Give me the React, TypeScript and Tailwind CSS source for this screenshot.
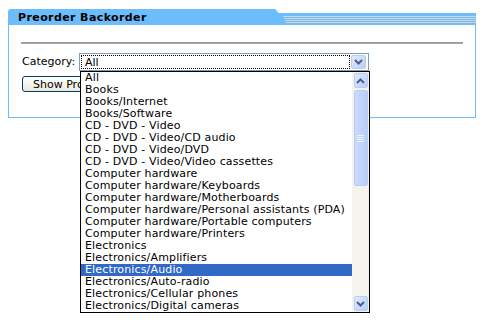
import React from "react";

const items = [
  "All",
  "Books",
  "Books/Internet",
  "Books/Software",
  "CD - DVD - Video",
  "CD - DVD - Video/CD audio",
  "CD - DVD - Video/DVD",
  "CD - DVD - Video/Video cassettes",
  "Computer hardware",
  "Computer hardware/Keyboards",
  "Computer hardware/Motherboards",
  "Computer hardware/Personal assistants (PDA)",
  "Computer hardware/Portable computers",
  "Computer hardware/Printers",
  "Electronics",
  "Electronics/Amplifiers",
  "Electronics/Audio",
  "Electronics/Auto-radio",
  "Electronics/Cellular phones",
  "Electronics/Digital cameras",
];

const Chevron = ({ up }: { up?: boolean }) => (
  <svg width="9" height="6" viewBox="0 0 9 6">
    <path
      d={up ? "M1 5 L4.5 1.5 L8 5" : "M1 1 L4.5 4.5 L8 1"}
      fill="none"
      stroke="#4d6185"
      strokeWidth="2"
    />
  </svg>
);

const ScrollBtn = ({ up }: { up?: boolean }) => (
  <div className="w-[14px] h-[15px] rounded-[2px] border border-[#b8cdf6] bg-gradient-to-br from-[#e1eafe] to-[#b9cdfa] flex items-center justify-center">
    <Chevron up={up} />
  </div>
);

export default function App() {
  return (
    <div
      className="relative w-[491px] h-[334px] bg-white overflow-hidden text-[11px] text-black"
      style={{ fontFamily: "Verdana, 'DejaVu Sans', sans-serif" }}
    >
      <div className="ml-[8px] pt-[9px] w-[468px]">
        {/* header */}
        <div className="flex h-[16px]">
          <div className="w-[266px] h-[16px] bg-[#6bbdfb] rounded-tl-[3px] flex items-center pl-[10px] font-bold text-[11px] leading-none pt-[1px] tracking-[0.4px]">
            Preorder Backorder
          </div>
          <svg width="4" height="16" viewBox="0 0 4 16" className="shrink-0 block">
            <polygon points="0,0 1,0 4,3 4,16 0,16" fill="#6bbdfb" />
          </svg>
          <div className="flex-1 flex flex-col">
            <div className="h-[4px]" />
            <div className="h-[12px] bg-[#6bbdfb] flex flex-col">
              <div className="h-[3px]" />
              <div className="h-px bg-[#d4d4d4] ml-[5px]" />
              <div className="h-px" />
              <div className="h-px bg-[#d4d4d4] ml-[6px]" />
              <div className="h-px" />
              <div className="h-px bg-[#d4d4d4] ml-[7px]" />
              <div className="h-px" />
              <div className="h-px bg-[#d4d4d4] ml-[8px]" />
            </div>
          </div>
        </div>
        {/* body */}
        <div className="h-[93px] border-l border-r border-b border-[#6bbdfb] pl-[12px] pr-[12px] pt-[17px]">
          <div className="h-[2px] border-t border-[#999999] bg-[#a8a8a8]" />
          <div className="flex items-center mt-[9px] h-[18px]">
            <div className="w-[58px] pl-[1px]">Category:</div>
            <div className="w-[290px] h-[18px] border border-[#7f9db9] bg-white flex items-center pl-[1px] pr-[2px]">
              <div className="flex-1 h-[14px] border border-dotted border-black flex items-center pl-[3px] leading-none">
                All
              </div>
              <div className="ml-[1px] w-[15px] h-[14px] rounded-[2px] border border-[#b8cdf6] bg-gradient-to-br from-[#e1eafe] to-[#b9cdfa] flex items-center justify-center">
                <Chevron />
              </div>
            </div>
          </div>
          <div className="mt-[5px] ml-[1px] w-[98px] h-[16px] rounded-[3px] border border-[#003c74] bg-gradient-to-b from-white to-[#ece9d8] flex items-center pl-[10px] leading-none">
            Show Products
          </div>
        </div>
      </div>

      {/* dropdown list overlay */}
      <div className="absolute left-[80px] top-[71px] w-[290px] h-[242px] border border-black bg-white flex">
        <div className="w-[271px] flex flex-col">
          {items.map((it) => (
            <div
              key={it}
              className={
                "h-[12px] leading-[12px] pl-[4px] whitespace-nowrap tracking-[0.15px] " +
                (it === "Electronics/Audio" ? "bg-[#316ac5] text-white" : "")
              }
            >
              {it}
            </div>
          ))}
        </div>
        <div className="flex-1 bg-[#f5f3ee] flex flex-col items-center pt-[1px] pb-[1px]">
          <ScrollBtn up />
          <div className="mt-[2px] w-[14px] h-[96px] rounded-[2px] border border-[#b8cdf6] bg-gradient-to-r from-[#c9dafc] to-[#b9cdfa] flex flex-col items-center justify-center gap-[1px]">
            <div className="w-[7px] h-px bg-[#eef3fe]" />
            <div className="w-[7px] h-px bg-[#eef3fe]" />
            <div className="w-[7px] h-px bg-[#eef3fe]" />
            <div className="w-[7px] h-px bg-[#eef3fe]" />
          </div>
          <div className="flex-1" />
          <ScrollBtn />
        </div>
      </div>
    </div>
  );
}
